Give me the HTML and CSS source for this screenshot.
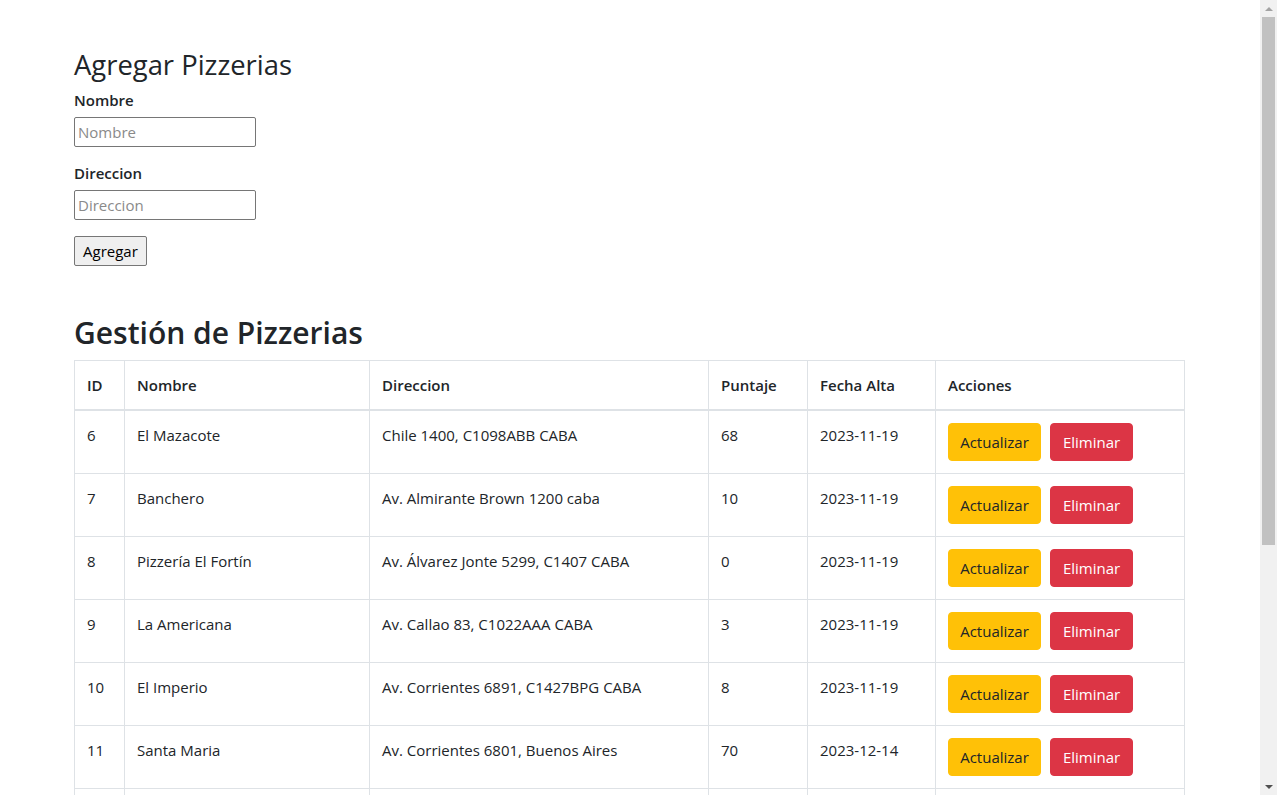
FILE: index.html
```html
<!DOCTYPE html>
<html lang="es">
<head>
<meta charset="utf-8">
<title>Pizzerias</title>
<link rel="stylesheet" href="styles.css">
</head>
<body>
<div class="page">
  <main class="container">
    <section class="add-form">
      <h3 class="form-title">Agregar Pizzerias</h3>
      <form class="pizza-form">
        <label class="field-label" for="nombre">Nombre</label>
        <input class="field-input" id="nombre" type="text" placeholder="Nombre">
        <label class="field-label" for="direccion">Direccion</label>
        <input class="field-input field-input-last" id="direccion" type="text" placeholder="Direccion">
        <button class="submit-btn" type="button">Agregar</button>
      </form>
    </section>

    <section class="listing">
      <h2 class="list-title">Gestión de Pizzerias</h2>
      <table class="pizza-table">
        <colgroup>
          <col class="col-id">
          <col class="col-nombre">
          <col class="col-dir">
          <col class="col-puntaje">
          <col class="col-fecha">
          <col class="col-acciones">
        </colgroup>
        <thead>
          <tr><th>ID</th><th>Nombre</th><th>Direccion</th><th>Puntaje</th><th>Fecha Alta</th><th>Acciones</th></tr>
        </thead>
        <tbody>
          <tr><td>6</td><td>El Mazacote</td><td>Chile 1400, C1098ABB CABA</td><td>68</td><td>2023-11-19</td><td><div class="actions"><button class="btn btn-warning">Actualizar</button><button class="btn btn-danger">Eliminar</button></div></td></tr>
          <tr><td>7</td><td>Banchero</td><td>Av. Almirante Brown 1200 caba</td><td>10</td><td>2023-11-19</td><td><div class="actions"><button class="btn btn-warning">Actualizar</button><button class="btn btn-danger">Eliminar</button></div></td></tr>
          <tr><td>8</td><td>Pizzería El Fortín</td><td>Av. Álvarez Jonte 5299, C1407 CABA</td><td>0</td><td>2023-11-19</td><td><div class="actions"><button class="btn btn-warning">Actualizar</button><button class="btn btn-danger">Eliminar</button></div></td></tr>
          <tr><td>9</td><td>La Americana</td><td>Av. Callao 83, C1022AAA CABA</td><td>3</td><td>2023-11-19</td><td><div class="actions"><button class="btn btn-warning">Actualizar</button><button class="btn btn-danger">Eliminar</button></div></td></tr>
          <tr><td>10</td><td>El Imperio</td><td>Av. Corrientes 6891, C1427BPG CABA</td><td>8</td><td>2023-11-19</td><td><div class="actions"><button class="btn btn-warning">Actualizar</button><button class="btn btn-danger">Eliminar</button></div></td></tr>
          <tr><td>11</td><td>Santa Maria</td><td>Av. Corrientes 6801, Buenos Aires</td><td>70</td><td>2023-12-14</td><td><div class="actions"><button class="btn btn-warning">Actualizar</button><button class="btn btn-danger">Eliminar</button></div></td></tr>
          <tr class="row-hidden-part"><td></td><td></td><td></td><td></td><td></td><td><div class="actions-spacer"></div></td></tr>
        </tbody>
      </table>
    </section>
  </main>
</div>
<div class="scrollbar" aria-hidden="true">
  <div class="sb-btn"><span class="sb-arrow-up"></span></div>
  <div class="sb-track"><div class="sb-thumb"></div></div>
  <div class="sb-btn"><span class="sb-arrow-down"></span></div>
</div>
</body>
</html>
```

FILE: styles.css
```css
* {
  box-sizing: border-box;
}

html {
  background: #fff;
}

body {
  margin: 0;
  height: 100vh;
  overflow: hidden;
  display: flex;
  font-family: "Open Sans", "Noto Sans", "DejaVu Sans", sans-serif;
  font-size: 15px;
  line-height: 24px;
  color: #212529;
  background: #fff;
}

.page {
  flex: 1;
  min-width: 0;
  overflow: hidden;
}

/* static replica of the window scrollbar */
.scrollbar {
  width: 17px;
  flex: none;
  display: flex;
  flex-direction: column;
  background: #f1f1f1;
}

.sb-btn {
  height: 17px;
  flex: none;
  display: flex;
  align-items: center;
  justify-content: center;
}

.sb-arrow-up {
  width: 0;
  height: 0;
  border-left: 4px solid transparent;
  border-right: 4px solid transparent;
  border-bottom: 4px solid #a3a3a3;
}

.sb-arrow-down {
  width: 0;
  height: 0;
  border-left: 4px solid transparent;
  border-right: 4px solid transparent;
  border-top: 4px solid #505050;
}

.sb-track {
  flex: 1;
  padding: 0 2px;
}

.sb-thumb {
  height: 528px;
  background: #c1c1c1;
}

.container {
  width: 1112px;
  margin: 0 auto;
  padding: 48px 0 42px;
}

.form-title {
  margin: 0 0 6px;
  font-size: 27.4px;
  line-height: 34px;
  font-weight: 500;
}

.pizza-form {
  display: flex;
  flex-direction: column;
  align-items: flex-start;
}

.field-label {
  font-weight: 600;
  margin-bottom: 5px;
}

.field-input {
  width: 182px;
  height: 30px;
  margin: 0 0 14px;
  padding: 1px 3px;
  border: 1px solid #767676;
  border-radius: 2px;
  font-family: inherit;
  font-size: 15px;
  line-height: 24px;
  color: #212529;
  background: #fff;
}

.field-input::placeholder {
  color: #8a8a8a;
}

.field-input-last {
  margin-bottom: 16px;
}

.submit-btn {
  height: 30px;
  padding: 0 8px;
  border: 1px solid #767676;
  border-radius: 2px;
  background: #efefef;
  font-family: inherit;
  font-size: 15px;
  line-height: 24px;
  color: #000;
}

.list-title {
  margin: 49px 0 9px;
  font-size: 30px;
  line-height: 36px;
  font-weight: 600;
}

.pizza-table {
  width: 1110px;
  border-collapse: collapse;
  table-layout: fixed;
  margin-bottom: 16px;
}

.col-id { width: 50px; }
.col-nombre { width: 245px; }
.col-dir { width: 339px; }
.col-puntaje { width: 99px; }
.col-fecha { width: 128px; }
.col-acciones { width: 249px; }

.pizza-table th,
.pizza-table td {
  padding: 12px;
  border: 1px solid #dee2e6;
  text-align: left;
  vertical-align: top;
}

.pizza-table th {
  font-weight: 600;
  vertical-align: bottom;
  border-bottom-width: 2px;
}

.actions {
  display: flex;
  gap: 9px;
}

.actions-spacer {
  height: 38px;
}

.btn {
  height: 38px;
  padding: 6px 0;
  border: 1px solid transparent;
  border-radius: 4px;
  font-family: inherit;
  font-size: 15px;
  line-height: 24px;
  text-align: center;
  cursor: pointer;
}

.btn-warning {
  width: 93px;
  background: #ffc107;
  border-color: #ffc107;
  color: #212529;
}

.btn-danger {
  width: 83px;
  background: #dc3545;
  border-color: #dc3545;
  color: #fff;
}
```
